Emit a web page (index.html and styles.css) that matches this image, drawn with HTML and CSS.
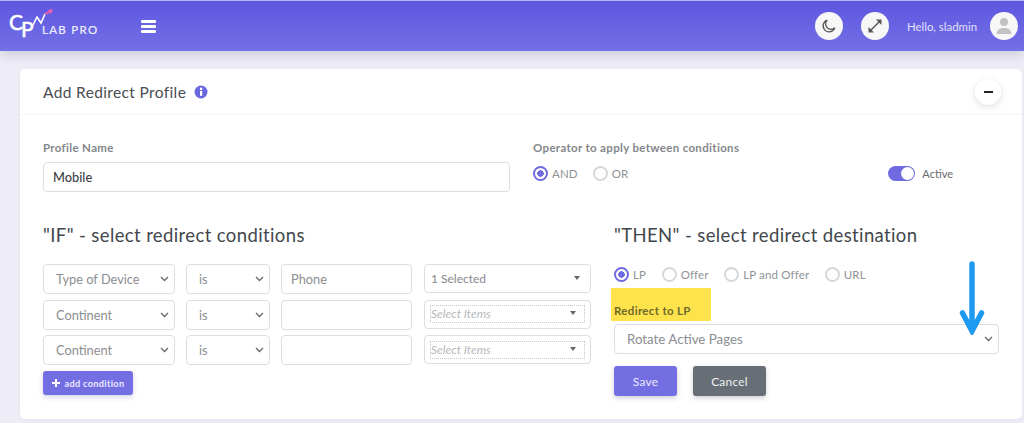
FILE: index.html
```html
<!DOCTYPE html>
<html lang="en">
<head>
<meta charset="utf-8">
<title>Add Redirect Profile</title>
<link rel="stylesheet" href="styles.css">
</head>
<body>
<header class="topbar">
  <div class="brand">
    <svg class="logo" width="90" height="36" viewBox="0 0 90 36" aria-label="CPV Lab Pro">
      <text class="logo-c" x="0" y="21">C</text>
      <text class="logo-p" x="12" y="28">P</text>
      <polyline class="logo-zig" points="24,16 28,8 32,14 36,5"/>
      <line class="logo-pink" x1="36" y1="5" x2="41" y2="2.500"/>
      <polygon class="logo-tip" points="39,1 44,0 42,5"/>
      <text class="logo-lab" x="33" y="25">LAB PRO</text>
    </svg>
    <button class="burger" aria-label="Menu"><span></span><span></span><span></span></button>
  </div>
  <div class="top-actions">
    <span class="round-btn">
      <svg width="16" height="16" viewBox="0 0 16 16"><path class="ico-line" d="M6.200 2.200A6 6 0 1 0 13.800 9.800 5.200 5.200 0 0 1 6.200 2.200Z"/></svg>
    </span>
    <span class="round-btn">
      <svg width="16" height="16" viewBox="0 0 16 16"><path class="ico-stroke" d="M4 12 12 4"/><path class="ico-fill" d="M9 1.500h5.500V7ZM7 14.500H1.500V9Z"/></svg>
    </span>
    <span class="hello">Hello, sladmin</span>
    <span class="round-btn avatar">
      <svg width="18" height="18" viewBox="0 0 18 18"><circle class="ava" cx="9" cy="5" r="4"/><path class="ava" d="M1.500 17c0-4 3-6 7.500-6s7.500 2 7.500 6Z"/></svg>
    </span>
  </div>
</header>

<main class="page">
  <section class="card">
    <div class="card-head">
      <h1 class="card-title">Add Redirect Profile</h1>
      <svg class="info" width="14" height="14" viewBox="0 0 14 14"><circle class="info-bg" cx="7" cy="7" r="6.500"/><rect class="info-fg" x="6" y="6" width="2.200" height="4.800"/><circle class="info-fg" cx="7.100" cy="3.900" r="1.300"/></svg>
      <button class="collapse" aria-label="Collapse"><span></span></button>
    </div>

    <div class="card-body">
      <div class="top-row">
        <div class="field">
          <label class="label">Profile Name</label>
          <input class="text-input name-input" type="text" value="Mobile">
        </div>
        <div class="field">
          <label class="label">Operator to apply between conditions</label>
          <div class="operator-line">
            <div class="radios">
              <span class="radio-item"><i class="radio on"></i>AND</span>
              <span class="radio-item"><i class="radio"></i>OR</span>
            </div>
            <div class="active-switch"><i class="toggle"><b></b></i>Active</div>
          </div>
        </div>
      </div>

      <div class="bottom-row">
        <div class="if-col">
          <h2 class="section-title">"IF" - select redirect conditions</h2>
          <div class="cond-rows">
            <div class="cond">
              <select class="sel"><option>Type of Device</option></select>
              <select class="sel"><option>is</option></select>
              <input class="text-input cond-input" type="text" value="Phone">
              <div class="multi"><span class="multi-val">1 Selected</span><i class="caret"></i></div>
            </div>
            <div class="cond">
              <select class="sel"><option>Continent</option></select>
              <select class="sel"><option>is</option></select>
              <input class="text-input cond-input" type="text">
              <div class="multi"><span class="multi-val empty">Select Items<i class="caret"></i></span></div>
            </div>
            <div class="cond">
              <select class="sel"><option>Continent</option></select>
              <select class="sel"><option>is</option></select>
              <input class="text-input cond-input" type="text">
              <div class="multi"><span class="multi-val empty">Select Items<i class="caret"></i></span></div>
            </div>
          </div>
          <button class="btn-add"><svg width="8" height="8" viewBox="0 0 8 8"><path class="plus" d="M3 0h2v3h3v2H5v3H3V5H0V3h3Z"/></svg>add condition</button>
        </div>

        <div class="then-col">
          <h2 class="section-title">"THEN" - select redirect destination</h2>
          <div class="radios dest-radios">
            <span class="radio-item"><i class="radio on"></i>LP</span>
            <span class="radio-item"><i class="radio"></i>Offer</span>
            <span class="radio-item"><i class="radio"></i>LP and Offer</span>
            <span class="radio-item"><i class="radio"></i>URL</span>
          </div>
          <div class="redirect-label-wrap"><span class="highlight"></span><label class="label redirect-label">Redirect to LP</label></div>
          <select class="sel dest-sel"><option>Rotate Active Pages</option></select>
          <div class="actions">
            <button class="btn btn-save">Save</button>
            <button class="btn btn-cancel">Cancel</button>
          </div>
          <svg class="arrow" width="26" height="74" viewBox="0 0 26 74"><path class="arrow-line" d="M13 3V69"/><path class="arrow-head" d="M3.500 52 13 70 22.500 52"/></svg>
        </div>
      </div>
    </div>
  </section>
</main>
</body>
</html>
```
FILE: styles.css
```css
* { box-sizing: border-box; }
html, body { margin: 0; height: 423px; overflow: hidden; }
body { background: #eeedf7; font-family: "Lato", "Open Sans", sans-serif; color: #4a4f55; }

.topbar {
  height: 51px;
  display: flex;
  align-items: center;
  justify-content: space-between;
  padding: 0 6px 0 9px;
  border-top: 1px solid #b9b5ee;
  background: linear-gradient(180deg, #5d56e0 0%, #7470e5 100%);
  box-shadow: 0 3px 12px rgba(60, 60, 90, .22);
}
.brand { display: flex; align-items: center; gap: 42px; }
.logo { display: block; margin-top: 1px; overflow: visible; }
.logo-c, .logo-p { font-family: "Lato", sans-serif; font-size: 21px; font-weight: 400; fill: #fff; stroke: #fff; stroke-width: .5px; }
.logo-lab { font-family: "Lato", sans-serif; font-size: 11.500px; font-weight: 400; letter-spacing: 1.300px; fill: #f0eeff; stroke: #f0eeff; stroke-width: .2px; }
.logo-zig { fill: none; stroke: #fff; stroke-width: 1.600; }
.logo-pink { stroke: #ee5fa8; stroke-width: 1.600; }
.logo-tip { fill: #ee5fa8; }
.burger { width: 15px; height: 13px; padding: 0; border: 0; background: none; display: flex; flex-direction: column; justify-content: space-between; }
.burger span { display: block; height: 3px; background: #fff; border-radius: 1px; }

.top-actions { display: flex; align-items: center; }
.round-btn { width: 28px; height: 28px; border-radius: 50%; background: #f7f7f8; display: flex; align-items: center; justify-content: center; margin-right: 18px; }
.round-btn.avatar { margin: 0 0 0 13px; }
.ico-line { fill: none; stroke: #555; stroke-width: 1.300; }
.ico-stroke { fill: none; stroke: #555; stroke-width: 1.400; }
.ico-fill { fill: #555; }
.ava { fill: #c2c2c4; }
.hello { font-size: 11.400px; color: #e2e0fb; white-space: nowrap; }

.page { padding: 18px 2px 0 20px; }
.card { height: 350px; background: #fff; border-radius: 5px; box-shadow: 0 1px 4px rgba(80, 80, 120, .06); }
.card-head { height: 46px; display: flex; align-items: center; padding: 0 21px 0 23px; border-bottom: 1px solid #f5f5f8; }
.card-title { margin: 0; font-size: 15.500px; font-weight: 400; color: #4a4d52; letter-spacing: .36px; }
.info { margin-left: 8px; }
.info-bg { fill: #6a66dc; }
.info-fg { fill: #fff; }
.collapse { margin-left: auto; width: 26px; height: 26px; padding: 0; border: 0; border-radius: 50%; background: #fff; box-shadow: 0 2px 7px rgba(0, 0, 0, .13); display: flex; align-items: center; justify-content: center; }
.collapse span { width: 9px; height: 2px; background: #222; }

.card-body { padding: 0 22px 0 23px; }
.top-row { display: grid; grid-template-columns: 467px 1fr; column-gap: 23px; padding-top: 26px; }
.field { display: flex; flex-direction: column; }
.label { font-size: 11.500px; font-weight: 700; color: #84878b; line-height: 14px; margin-bottom: 7px; letter-spacing: .33px; white-space: nowrap; }
.text-input { height: 30px; border: 1px solid #dcdee0; border-radius: 4px; background: #fff; padding: 0 9px; font: inherit; font-size: 12.800px; color: #4a4f55; outline: 0; }
.name-input { color: #3d4146; font-weight: 500; }
.operator-line { display: flex; align-items: center; height: 24px; margin-top: -1px; }
.radios { display: flex; align-items: center; font-size: 11.500px; color: #8f9296; }
.radio-item { display: inline-flex; align-items: center; gap: 4px; margin-right: 15px; letter-spacing: .15px; }
.radio { width: 15px; height: 15px; border-radius: 50%; border: 2.500px solid #d5d8da; background: #fff; display: block; }
.radio.on { border-color: #6f6ae0; background: radial-gradient(circle, #6f6ae0 0 3px, #fff 3.500px); }
.active-switch { margin-left: auto; margin-right: 47px; display: flex; align-items: center; gap: 7px; font-size: 11px; color: #666a6e; }
.toggle { width: 27px; height: 15px; border-radius: 8px; background: #6f6ae0; display: flex; align-items: center; justify-content: flex-end; padding-right: 1px; }
.toggle b { width: 13px; height: 13px; border-radius: 50%; background: #fff; display: block; }

.bottom-row { display: grid; grid-template-columns: 548px 385px; column-gap: 23px; margin-top: 31px; }
.section-title { margin: 0; font-size: 18.500px; line-height: 24px; font-weight: 400; color: #43474c; letter-spacing: .38px; white-space: nowrap; }
.cond-rows { display: flex; flex-direction: column; gap: 5.500px; margin-top: 17px; }
.cond { display: grid; grid-template-columns: 132px 84px 131px 167px; column-gap: 11px; height: 30px; }
.cond > :nth-child(4) { margin-left: 1px; width: 167px; }
.sel {
  appearance: none;
  height: 30px;
  width: 100%;
  border: 1px solid #dcdee0;
  border-radius: 4px;
  padding: 0 22px 0 12px;
  font: inherit;
  font-size: 12.800px;
  color: #8b8e92;
  background: #fff url("data:image/svg+xml,%3Csvg xmlns='http://www.w3.org/2000/svg' width='9' height='6' viewBox='0 0 9 6'%3E%3Cpath d='M1 1l3.500 3.500L8 1' fill='none' stroke='%23666' stroke-width='1.300'/%3E%3C/svg%3E") no-repeat right 5px center;
}
.cond-input { color: #8b8e92; width: 100%; }
.multi { height: 29px; border: 1px solid #dcdee0; border-radius: 4px; display: flex; align-items: center; justify-content: space-between; padding: 0 10px 0 6px; }
.multi-val { font-size: 12px; color: #85888c; }
.multi-val.empty { flex: 0 0 155px; height: 18px; line-height: 16px; margin: 0 -6px 0 -1px; border: 1px dotted #c6c8ca; font-style: italic; color: #b6b8bb; display: flex; align-items: center; justify-content: space-between; padding-right: 8px; }
.caret { width: 0; height: 0; border: 3.500px solid transparent; border-top: 4px solid #666; border-bottom: 0; margin-top: -2px; }
.btn-add { margin-top: 6px; width: 90px; height: 24px; border: 0; border-radius: 3px; background: #736fe3; color: #eceaff; font: inherit; font-size: 9.200px; font-weight: 700; letter-spacing: .3px; display: flex; align-items: center; justify-content: center; gap: 5px; padding: 0; box-shadow: 0 2px 5px rgba(80, 80, 160, .25); }
.plus { fill: #fff; }

.then-col { position: relative; }
.dest-radios { margin-top: 20px; height: 15px; }
.dest-radios .radio-item { margin-right: 15.500px; }
.redirect-label-wrap { position: relative; margin-top: 22px; }
.highlight { position: absolute; left: -3px; top: -16px; width: 100px; height: 33px; background: #ffe34d; }
.redirect-label { position: relative; display: block; color: #6f6a2a; margin-bottom: 6px; }
.dest-sel { display: block; padding-left: 12px; font-size: 13.300px; }
.actions { display: flex; gap: 16px; margin-top: 12px; }
.btn { height: 30px; border: 0; border-radius: 3px; font: inherit; font-size: 12px; letter-spacing: .2px; box-shadow: 0 2px 5px rgba(60, 60, 90, .25); padding: 0; }
.btn-save { width: 63px; background: #736fe3; color: #eceaff; }
.btn-cancel { width: 73px; background: #676e76; color: #eef0f2; }
.arrow { position: absolute; left: 345px; top: 38px; }
.arrow-line { fill: none; stroke: #1e9af0; stroke-width: 5.500; stroke-linecap: round; }
.arrow-head { fill: none; stroke: #1e9af0; stroke-width: 5.500; stroke-linecap: round; stroke-linejoin: miter; }
```
